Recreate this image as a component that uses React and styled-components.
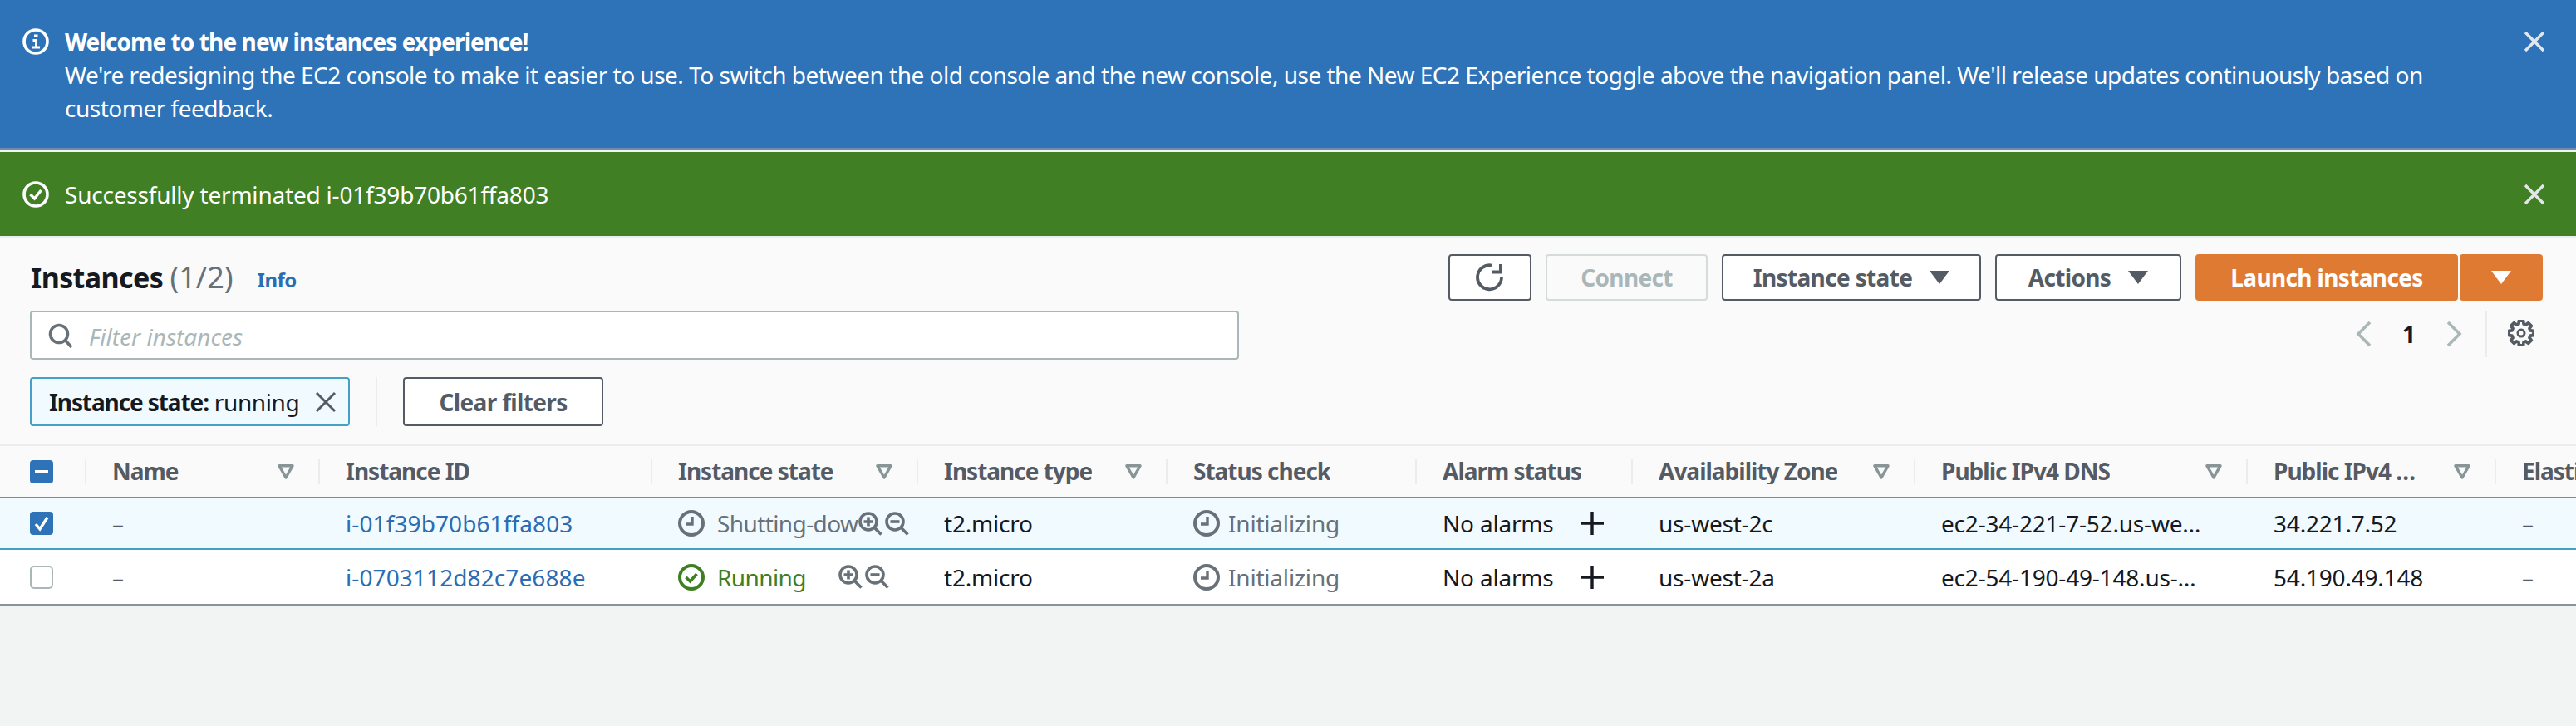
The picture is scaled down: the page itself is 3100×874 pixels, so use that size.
import React from "react";
import styled, { createGlobalStyle } from "styled-components";

const GlobalStyle = createGlobalStyle`
  html, body { margin: 0; padding: 0; background: #f2f3f3; }
  body { font-family: "Noto Sans", "Open Sans", sans-serif; font-size: 28px; line-height: 40px; color: #16191f; letter-spacing: -0.2px; }
`;

const COLUMNS = "102px 281px 400px 320px 300px 300px 260px 340px 400px 299px 300px";

const Page = styled.div`
  width: 3100px;
  height: 874px;
  overflow: hidden;
  background: #f2f3f3;
`;

const Banner = styled.div`
  display: flex;
  align-items: flex-start;
  background: ${(p) => p.$bg};
  color: #fff;
  padding: ${(p) => p.$top}px 36px 30px 27px;
  box-shadow: ${(p) => (p.$shadow ? "inset 0 -2px 0 #6f8ca8" : "none")};
  margin-bottom: ${(p) => p.$gap}px;
`;

const BannerIcon = styled.svg`
  width: 32px;
  height: 32px;
  margin: 4px 19px 0 0;
  flex-shrink: 0;
`;

const BannerText = styled.div`
  flex: 1;
  padding-right: 60px;
  letter-spacing: ${(p) => p.$spacing}px;
  strong { display: block; font-weight: 700; letter-spacing: -0.9px; }
`;

const CloseIcon = styled.svg`
  width: 28px;
  height: 28px;
  margin-top: 6px;
  flex-shrink: 0;
`;

const Content = styled.div`
  background: #fafafa;
  border-top: 2px solid #eaeded;
`;

const Toolbar = styled.div`
  display: grid;
  grid-template-columns: 1455px 1fr;
  padding: 20px 40px 22px 36px;
`;

const LeftCol = styled.div`
  display: flex;
  flex-direction: column;
`;

const TitleRow = styled.div`
  height: 56px;
  display: flex;
  align-items: center;
  margin-bottom: 12px;
  padding-left: 1px;
`;

const Title = styled.h1`
  margin: 0;
  font-size: 34px;
  line-height: 56px;
  font-weight: 700;
  letter-spacing: -0.6px;
  span { font-size: 36px; font-weight: 400; letter-spacing: 0; color: #687078; }
`;

const InfoLink = styled.a`
  font-size: 24px;
  font-weight: 700;
  letter-spacing: -0.5px;
  color: #2a6db3;
  margin: 6px 0 0 29px;
`;

const SearchBox = styled.div`
  height: 59px;
  box-sizing: border-box;
  background: #fff;
  border: 2px solid #aab7b8;
  border-radius: 4px;
  display: flex;
  align-items: center;
  padding-left: 20px;
  margin-bottom: 21px;
  svg { width: 30px; height: 30px; margin-right: 19px; }
`;

const Placeholder = styled.span`
  font-style: italic;
  color: #aab7b8;
  letter-spacing: 0;
  padding-top: 2px;
`;

const FilterRow = styled.div`
  display: flex;
  align-items: stretch;
  height: 59px;
`;

const Chip = styled.div`
  width: 385px;
  box-sizing: border-box;
  display: flex;
  align-items: center;
  justify-content: space-between;
  padding: 0 13px 0 21px;
  background: #f1faff;
  border: 2px solid #44a0c8;
  border-radius: 4px;
  white-space: nowrap;
  letter-spacing: -0.4px;
  b { font-weight: 700; letter-spacing: -1.1px; }
  svg { width: 28px; height: 28px; flex-shrink: 0; }
`;

const VDivider = styled.div`
  width: 2px;
  background: #eaeded;
  margin: 0 31px;
`;

const Button = styled.div`
  box-sizing: border-box;
  height: ${(p) => p.$h || 56}px;
  width: ${(p) => p.$w}px;
  display: flex;
  align-items: center;
  justify-content: center;
  gap: 21px;
  font-weight: 700;
  letter-spacing: -0.65px;
  white-space: nowrap;
  border-radius: 4px;
  color: ${(p) => (p.$primary ? "#fff" : p.$disabled ? "#aab7b8" : "#545b64")};
  background: ${(p) => (p.$primary ? "#df7a33" : p.$disabled ? "#fafafa" : "#fff")};
  border: 2px solid ${(p) => (p.$primary ? "#df7a33" : p.$disabled ? "#d5dbdb" : "#545b64")};
`;

const RightCol = styled.div`
  display: flex;
  flex-direction: column;
  align-items: flex-end;
`;

const ButtonRow = styled.div`
  display: flex;
  gap: 17px;
  margin-bottom: 12px;
`;

const SplitButton = styled.div`
  display: flex;
  gap: 2px;
`;

const Caret = styled.svg`
  width: 24px;
  height: 16px;
  flex-shrink: 0;
`;

const Pager = styled.div`
  display: flex;
  align-items: center;
  height: 56px;
  margin-right: 10px;
`;

const PagerChevron = styled.svg`
  width: 20px;
  height: 32px;
`;

const PageNum = styled.span`
  width: 88px;
  text-align: center;
  font-weight: 700;
`;

const PagerDivider = styled.div`
  width: 2px;
  height: 56px;
  background: #eaeded;
  margin: 0 25px 0 28px;
`;

const GearIcon = styled.svg`
  width: 32px;
  height: 32px;
  margin-top: -2px;
`;

const Table = styled.div`
  border-top: 2px solid #eaeded;
  box-shadow: 0 2px 0 #879596;
  background: #fff;
`;

const HeadRow = styled.div`
  display: grid;
  grid-template-columns: ${COLUMNS};
  height: 61px;
  align-items: center;
  background: #fafafa;
`;

const CheckCell = styled.div`
  padding-left: 36px;
  display: flex;
  align-items: center;
`;

const HeadCell = styled.div`
  height: 30px;
  box-sizing: border-box;
  border-left: 2px solid #eaeded;
  padding: 0 29px 0 31px;
  display: flex;
  align-items: center;
  justify-content: space-between;
  gap: 36px;
  min-width: 0;
  overflow: hidden;
  color: #545b64;
  font-weight: 700;
  letter-spacing: -1px;
  white-space: nowrap;
`;

const HeadLabel = styled.span`
  min-width: 0;
  overflow: hidden;
  text-overflow: ellipsis;
  margin-top: -2px;
`;

const SortIcon = styled.svg`
  width: 20px;
  height: 18px;
  flex-shrink: 0;
`;

const Row = styled.div`
  display: grid;
  grid-template-columns: ${COLUMNS};
  align-items: center;
  height: ${(p) => p.$h}px;
  background: ${(p) => (p.$selected ? "#f1faff" : "#fff")};
  box-sizing: border-box;
  border-top: ${(p) => (p.$selected ? "2px solid #44a0c8" : "none")};
  border-bottom: ${(p) => (p.$selected ? "2px solid #44a0c8" : "none")};
`;

const Cell = styled.div`
  padding: 0 ${(p) => p.$pr ?? 10}px 0 33px;
  white-space: nowrap;
  overflow: hidden;
  text-overflow: ellipsis;
  min-width: 0;
`;

const Dash = styled(Cell)`
  color: #545b64;
`;

const IdLink = styled.a`
  color: #2a6db3;
  letter-spacing: 0.1px;
`;

const StatusCell = styled.div`
  display: flex;
  align-items: center;
  padding: 0 9px 0 33px;
  min-width: 0;
  white-space: nowrap;
  color: ${(p) => p.$color};
`;

const StatusIcon = styled.svg`
  width: 32px;
  height: 32px;
  flex-shrink: 0;
  margin-right: ${(p) => p.$gap}px;
`;

const StateLabel = styled.span`
  flex: 0 1 auto;
  min-width: 0;
  overflow: hidden;
  padding-right: 39px;
  letter-spacing: -0.6px;
`;

const ZoomIcon = styled.svg`
  width: 29px;
  height: 29px;
  flex-shrink: 0;
  & + & { margin-left: 3px; }
`;

const AlarmCell = styled.div`
  display: flex;
  align-items: center;
  justify-content: space-between;
  padding: 0 33px 0 33px;
  white-space: nowrap;
  svg { width: 28px; height: 28px; }
`;

const Checkbox = ({ state }) => {
  if (state === "empty") {
    return (
      <svg width="28" height="28" viewBox="0 0 28 28">
        <rect x="1" y="1" width="26" height="26" rx="4" fill="#fff" stroke="#aab7b8" strokeWidth="2" />
      </svg>
    );
  }
  return (
    <svg width="28" height="28" viewBox="0 0 28 28">
      <rect width="28" height="28" rx="4" fill="#2e73b8" />
      {state === "checked" ? (
        <path d="M7 15l5 6 9-14" fill="none" stroke="#fff" strokeWidth="3.4" />
      ) : (
        <path d="M6 14h16" stroke="#fff" strokeWidth="4" />
      )}
    </svg>
  );
};

const Sort = () => (
  <SortIcon viewBox="0 0 20 18">
    <path d="M2 1.8h16L10 16z" fill="none" stroke="#879596" strokeWidth="3.4" strokeLinejoin="round" />
  </SortIcon>
);

const Clock = ({ gap }) => (
  <StatusIcon $gap={gap} viewBox="0 0 32 32" fill="none" stroke="#687078" strokeWidth="4">
    <circle cx="16" cy="16" r="14" />
    <path d="M17 8v9H9" strokeWidth="3.4" />
  </StatusIcon>
);

const Zoom = ({ minus }) => (
  <ZoomIcon viewBox="0 0 29 29" fill="none" stroke="#687078" strokeWidth="3.6">
    <circle cx="12" cy="12" r="10" />
    <path d="M19 19l8.5 8.5" />
    <path d={minus ? "M6.5 12h11" : "M6.5 12h11M12 6.5v11"} />
  </ZoomIcon>
);

const Plus = () => (
  <svg viewBox="0 0 28 28" fill="none" stroke="#16191f" strokeWidth="3.4">
    <path d="M0 14h28M14 0v28" />
  </svg>
);

const X = ({ color, width }) => (
  <path d="M3 3l22 22M25 3L3 25" fill="none" stroke={color} strokeWidth={width} />
);

// 8 tooth gear outline, easier to compute than to write by hand
const gearPath = () => {
  const pts = [];
  for (let i = 0; i < 8; i++) {
    const a = (i * Math.PI) / 4 - Math.PI / 2;
    [[-0.27, 11.5], [-0.17, 15], [0.17, 15], [0.27, 11.5]].forEach(([d, r]) => {
      pts.push(`${(16 + r * Math.cos(a + d)).toFixed(2)} ${(16 + r * Math.sin(a + d)).toFixed(2)}`);
    });
  }
  return `M${pts.join("L")}Z`;
};

const rows = [
  {
    id: "i-01f39b70b61ffa803",
    selected: true,
    h: 64,
    check: "checked",
    state: "Shutting-down",
    zone: "us-west-2c",
    dns: "ec2-34-221-7-52.us-west-2.compute.amazonaws.com",
    ip: "34.221.7.52",
  },
  {
    id: "i-0703112d82c7e688e",
    h: 65,
    check: "empty",
    state: "Running",
    zone: "us-west-2a",
    dns: "ec2-54-190-49-148.us-west-2.compute.amazonaws.com",
    ip: "54.190.49.148",
  },
];

const headers = [
  ["Name", true],
  ["Instance ID", false],
  ["Instance state", true],
  ["Instance type", true],
  ["Status check", false],
  ["Alarm status", false],
  ["Availability Zone", true],
  ["Public IPv4 DNS", true],
  ["Public IPv4 address", true],
  ["Elastic IP", false],
];

export default function App() {
  return (
    <Page>
      <GlobalStyle />
      <Banner $bg="#2e73b8" $shadow $gap={3} $top={30}>
        <BannerIcon viewBox="0 0 32 32" fill="none" stroke="#fff" strokeWidth="3.6">
          <circle cx="16" cy="16" r="14" />
          <rect x="14" y="7.5" width="4.5" height="3.5" fill="#fff" stroke="none" />
          <path d="M12.5 14.5h4v8.5M11.5 23h9.5" strokeWidth="2.8" />
        </BannerIcon>
        <BannerText $spacing={-0.5}>
          <strong>Welcome to the new instances experience!</strong>
          We're redesigning the EC2 console to make it easier to use. To switch between the old console and the new console, use the New EC2 Experience toggle above the navigation panel. We'll release updates continuously based on customer feedback.
        </BannerText>
        <CloseIcon viewBox="0 0 28 28"><X color="#e4e7e9" width="3.4" /></CloseIcon>
      </Banner>
      <Banner $bg="#407f24" $gap={0} $top={31}>
        <BannerIcon viewBox="0 0 32 32" fill="none" stroke="#fff" strokeWidth="3.6">
          <circle cx="16" cy="16" r="14" />
          <path d="M9.5 16l5 5 8-10" strokeWidth="3.4" />
        </BannerIcon>
        <BannerText $spacing={-0.2}>Successfully terminated i-01f39b70b61ffa803</BannerText>
        <CloseIcon viewBox="0 0 28 28"><X color="#e4e7e9" width="3.4" /></CloseIcon>
      </Banner>
      <Content>
        <Toolbar>
          <LeftCol>
            <TitleRow>
              <Title>Instances <span>(1/2)</span></Title>
              <InfoLink>Info</InfoLink>
            </TitleRow>
            <SearchBox>
              <svg viewBox="0 0 30 30" fill="none" stroke="#687078" strokeWidth="3.6">
                <circle cx="13" cy="13" r="10.5" />
                <path d="M20 20l8 9" />
              </svg>
              <Placeholder>Filter instances</Placeholder>
            </SearchBox>
            <FilterRow>
              <Chip>
                <span><b>Instance state:</b> running</span>
                <svg viewBox="0 0 28 28"><X color="#545b64" width="3" /></svg>
              </Chip>
              <VDivider />
              <Button $w={241} $h={59}>Clear filters</Button>
            </FilterRow>
          </LeftCol>
          <RightCol>
            <ButtonRow>
              <Button $w={100}>
                <svg width="34" height="34" viewBox="0 0 34 34" fill="none" stroke="#545b64" strokeWidth="3.8">
                  <path d="M31 17A14.5 14.5 0 1 1 19 2.5" />
                  <path d="M30 1v9.5H20" strokeWidth="4" />
                </svg>
              </Button>
              <Button $w={195} $disabled>Connect</Button>
              <Button $w={312}>
                Instance state
                <Caret viewBox="0 0 24 16"><path d="M0 0h24L12 16z" fill="#545b64" /></Caret>
              </Button>
              <Button $w={224}>
                Actions
                <Caret viewBox="0 0 24 16"><path d="M0 0h24L12 16z" fill="#545b64" /></Caret>
              </Button>
              <SplitButton>
                <Button $w={316} $primary>Launch instances</Button>
                <Button $w={100} $primary>
                  <Caret viewBox="0 0 24 16"><path d="M0 0h24L12 16z" fill="#fff" /></Caret>
                </Button>
              </SplitButton>
            </ButtonRow>
            <Pager>
              <PagerChevron viewBox="0 0 20 32" fill="none" stroke="#aab7b8" strokeWidth="3.6">
                <path d="M17 2L3 16l14 14" />
              </PagerChevron>
              <PageNum>1</PageNum>
              <PagerChevron viewBox="0 0 20 32" fill="none" stroke="#aab7b8" strokeWidth="3.6">
                <path d="M3 2l14 14L3 30" />
              </PagerChevron>
              <PagerDivider />
              <GearIcon viewBox="0 0 32 32">
                <path d={gearPath()} fill="none" stroke="#545b64" strokeWidth="3.8" strokeLinejoin="round" />
                <circle cx="16" cy="16" r="4" fill="none" stroke="#545b64" strokeWidth="3" />
              </GearIcon>
            </Pager>
          </RightCol>
        </Toolbar>
        <Table>
          <HeadRow>
            <CheckCell><Checkbox state="mixed" /></CheckCell>
            {headers.map(([label, sortable]) => (
              <HeadCell key={label}>
                <HeadLabel>{label}</HeadLabel>
                {sortable && <Sort />}
              </HeadCell>
            ))}
          </HeadRow>
          {rows.map((r) => (
            <Row key={r.id} $selected={r.selected} $h={r.h}>
              <CheckCell><Checkbox state={r.check} /></CheckCell>
              <Dash>–</Dash>
              <Cell><IdLink>{r.id}</IdLink></Cell>
              <StatusCell $color={r.selected ? "#687078" : "#3f7f23"}>
                {r.selected ? (
                  <Clock gap={15} />
                ) : (
                  <StatusIcon $gap={15} viewBox="0 0 32 32" fill="none" stroke="#3f7f23" strokeWidth="4">
                    <circle cx="16" cy="16" r="14" />
                    <path d="M9.5 16l5 5 8-9" strokeWidth="3.6" />
                  </StatusIcon>
                )}
                <StateLabel>{r.state}</StateLabel>
                <Zoom />
                <Zoom minus />
              </StatusCell>
              <Cell>t2.micro</Cell>
              <StatusCell $color="#687078">
                <Clock gap={10} />
                <span>Initializing</span>
              </StatusCell>
              <AlarmCell>
                <span>No alarms</span>
                <Plus />
              </AlarmCell>
              <Cell>{r.zone}</Cell>
              <Cell $pr={42}>{r.dns}</Cell>
              <Cell>{r.ip}</Cell>
              <Dash>–</Dash>
            </Row>
          ))}
        </Table>
      </Content>
    </Page>
  );
}
